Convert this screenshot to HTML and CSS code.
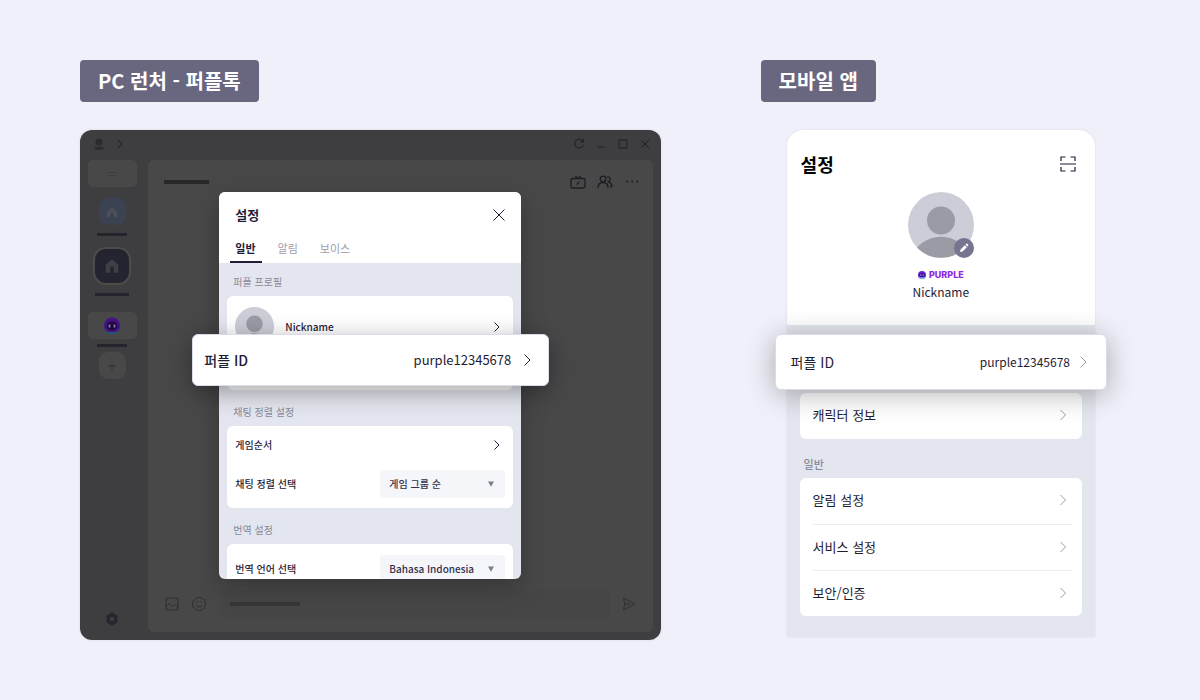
FILE: index.html
```html
<!DOCTYPE html>
<html lang="ko">
<head>
  <meta charset="utf-8">
  <title>퍼플 ID</title>
  <link rel="stylesheet" href="styles.css">
</head>
<body>
<div class="container">

  <!-- PC launcher -->
  <section class="pc">
    <h2 class="badge">PC 런처 - 퍼플톡</h2>
    <div class="window">
      <div class="titlebar">
        <svg width="12" height="14" viewBox="0 0 12 14"><circle cx="6" cy="5" r="3.6" fill="#2c2c2e"/><path d="M1 11.500c1-2.600 9-2.600 10 0-1.500 2-8.500 2-10 0z" fill="#2c2c2e"/></svg>
        <svg width="8" height="10" viewBox="0 0 8 10"><path d="M2 1l4 4-4 4" class="line"/></svg>
        <div class="window-controls">
          <svg width="12" height="12" viewBox="0 0 12 12"><path d="M10 3.500A4.400 4.400 0 1 0 10.300 7M10.300 1v3H7.300" class="line"/></svg>
          <svg width="12" height="12" viewBox="0 0 12 12"><path d="M2.500 9h7" class="line"/></svg>
          <svg width="12" height="12" viewBox="0 0 12 12"><path d="M2 2h8v8H2z" class="line"/></svg>
          <svg width="12" height="12" viewBox="0 0 12 12"><path d="M2 2l8 8M10 2l-8 8" class="line"/></svg>
        </div>
      </div>

      <div class="window-body">
        <div class="sidebar">
          <div class="side-box">
            <svg width="12" height="6" viewBox="0 0 12 6"><path d="M1 1.500h10M1 4.500h10" stroke="#3f3f40" fill="none"/></svg>
          </div>
          <div class="side-group">
            <div class="side-icon blue">
              <svg width="14" height="14" viewBox="0 0 14 14"><path d="M7 2L2 6.500v5.500h3.500V9a1.500 1.500 0 0 1 3 0v3H12V6.500z" fill="#4a4f58"/></svg>
            </div>
            <div class="bar"></div>
          </div>
          <div class="side-group">
            <div class="side-icon active">
              <svg width="16" height="16" viewBox="0 0 14 14"><path d="M7 1L1.500 6v7H5.500V9a1.500 1.500 0 0 1 3 0v4h4V6z" fill="#3e3e44"/></svg>
            </div>
            <div class="bar wide"></div>
          </div>
          <div class="side-group talk">
            <div class="side-box">
              <svg width="20" height="20" viewBox="0 0 20 20"><circle cx="10" cy="10" r="8.500" fill="#2d4a68"/><circle cx="10" cy="9.500" r="8" fill="#451482"/><ellipse cx="10" cy="10" rx="5.500" ry="4.500" fill="#210843"/><path d="M4 15c2 4 10 4 12 0-3 1.800-9 1.800-12 0z" fill="#246272"/><path d="M7.500 8.500v3M12.500 8.500v3" stroke="#8c77a4" stroke-width="1.800"/></svg>
            </div>
            <div class="bar"></div>
          </div>
          <div class="side-icon plus">
            <svg width="10" height="10" viewBox="0 0 10 10"><path d="M5 1v8M1 5h8" stroke="#2c2c2e" stroke-width=".8" fill="none"/></svg>
          </div>
          <svg class="gear" width="14" height="14" viewBox="0 0 14 14"><path d="M5.300.8h3.400l.5 1.800 1.800-.4 1.900 3L11.700 7l1.200 1.800-1.900 3-1.800-.4-.5 1.800H5.300l-.5-1.800-1.800.4-1.900-3L2.300 7 1.100 5.200l1.900-3 1.800.4z" fill="#27262e"/><circle cx="7" cy="7" r="2.100" fill="#434345"/></svg>
        </div>

        <div class="chat">
          <div class="chat-header">
            <div class="bar"></div>
            <svg width="16" height="16" viewBox="0 0 16 16"><path d="M2.500 4.500h11q1.500 0 1.500 1.500v6.500q0 1.500-1.500 1.500h-11Q1 14 1 12.500V6q0-1.500 1.500-1.500zM5.500 2l2 2.500M10.500 2l-2 2.500M6.700 10.500l2.600-2.500" class="line bold"/></svg>
            <svg width="16" height="16" viewBox="0 0 16 16"><circle cx="6" cy="5" r="2.800" class="line bold"/><path d="M1 14c0-3.500 2-5.500 5-5.500s5 2 5 5.500M10 3.200a2.300 2.300 0 1 1 .5 4.300C13 8 14.800 10 14.800 12.500h-2" class="line bold"/></svg>
            <svg width="16" height="16" viewBox="0 0 16 16"><path d="M3.200 7.500h.010M8.200 7.500h.010M13.200 7.500h.010" stroke="#1d1c24" stroke-width="2" stroke-linecap="round"/></svg>
          </div>
          <div class="chat-footer">
            <svg width="14" height="14" viewBox="0 0 14 14"><path d="M1 1h12v12H1zM1 9.500l3.500-3.500 3 4 2.500-2.500 3 3M9.500 3.800h1" class="line dim"/></svg>
            <svg width="16" height="16" viewBox="0 0 16 16"><circle cx="8" cy="8" r="6.500" class="line dim"/><path d="M5 9c1 2.500 5 2.500 6 0M6 5.500v1.300M10 5.500v1.300" class="line dim"/></svg>
            <div class="chat-input"><div class="bar"></div></div>
            <svg width="14" height="14" viewBox="0 0 14 14"><path d="M1.500 1l11.500 6-11.500 6 1.200-6zM2.700 7H8" class="line dim"/></svg>
          </div>
        </div>
      </div>

      <div class="modal-wrap">
        <div class="modal">
          <div class="modal-header">
            <div class="modal-title">
              <h3>설정</h3>
              <button class="icon-button" aria-label="닫기">
                <svg width="14" height="14" viewBox="0 0 14 14"><path d="M1.500 1.500l11 11M12.500 1.500l-11 11" class="arrow"/></svg>
              </button>
            </div>
            <div class="tabs">
              <button class="tab selected">일반</button>
              <button class="tab">알림</button>
              <button class="tab">보이스</button>
            </div>
          </div>
          <div class="modal-body">
            <h4>퍼플 프로필</h4>
            <div class="card profile-card">
              <a class="profile-row" href="#">
                <svg width="39" height="39" viewBox="0 0 66 66"><circle cx="33" cy="33" r="33" fill="#cdcdd8"/><circle cx="33" cy="28.500" r="14" fill="#9b9ba5"/><path d="M9 55.500C22 41 44 41 57 55.500A33 33 0 0 1 9 55.500z" fill="#9b9ba5"/></svg>
                <span>Nickname</span>
                <svg width="8" height="12" viewBox="0 0 8 12"><path d="M1.500 1.500L6 6l-4.500 4.500" class="arrow"/></svg>
              </a>
            </div>
            <h4>채팅 정렬 설정</h4>
            <div class="card">
              <a class="row" href="#">
                <span>게임순서</span>
                <svg width="8" height="12" viewBox="0 0 8 12"><path d="M1.500 1.500L6 6l-4.500 4.500" class="arrow"/></svg>
              </a>
              <div class="row">
                <label for="chatSort">채팅 정렬 선택</label>
                <div class="select-box">
                  <select id="chatSort"><option>게임 그룹 순</option></select>
                  <svg width="6" height="6" viewBox="0 0 6 6"><path d="M0 .5h6L3 5.800z" fill="#7d7c8e"/></svg>
                </div>
              </div>
            </div>
            <h4>번역 설정</h4>
            <div class="card">
              <div class="row language">
                <label for="language">번역 언어 선택</label>
                <div class="select-box">
                  <select id="language"><option>Bahasa Indonesia</option></select>
                  <svg width="6" height="6" viewBox="0 0 6 6"><path d="M0 .5h6L3 5.800z" fill="#7d7c8e"/></svg>
                </div>
              </div>
            </div>
          </div>
        </div>

        <a class="id-card" href="#">
          <strong>퍼플 ID</strong>
          <span>purple12345678</span>
          <svg width="9" height="14" viewBox="0 0 9 14"><path d="M1.500 1.500L7 7l-5.500 5.500" class="arrow"/></svg>
        </a>
      </div>
    </div>
  </section>

  <!-- Mobile app -->
  <section class="mobile">
    <h2 class="badge">모바일 앱</h2>
    <div class="phone">
      <div class="phone-header">
        <div class="phone-title">
          <h3>설정</h3>
          <button class="icon-button" aria-label="스캔">
            <svg width="16" height="16" viewBox="0 0 16 16"><path d="M1 5V1h4.500M10.500 1H15v4M1 11v4h4.500M10.500 15H15v-4M0 8h16" stroke="#1f1c35" stroke-width="1.200" fill="none"/></svg>
          </button>
        </div>
        <div class="avatar">
          <svg width="66" height="66" viewBox="0 0 66 66"><circle cx="33" cy="33" r="33" fill="#cdcdd8"/><circle cx="33" cy="28.500" r="14" fill="#9b9ba5"/><path d="M9 55.500C22 41 44 41 57 55.500A33 33 0 0 1 9 55.500z" fill="#9b9ba5"/></svg>
          <button class="edit" aria-label="편집">
            <svg width="10" height="10" viewBox="0 0 10 10"><path d="M1 9l.6-2.600L5.800 2.200l2 2L3.600 8.400zM6.400 1.600L7.300.8q.5-.4 1 0l.9.9q.4.500 0 1l-.8.900z" fill="#fff"/></svg>
          </button>
        </div>
        <div class="brand">
          <svg width="8" height="8" viewBox="0 0 8 8"><circle cx="4" cy="4" r="4" fill="#6b24d6"/><path d="M.3 5.400a4 4 0 0 0 7.400 0C5.500 7 2.500 7 .3 5.400z" fill="#7be0ff"/><ellipse cx="4" cy="4" rx="2.900" ry="2" fill="#32108a"/><path d="M2.800 3.300v1.500M5.200 3.300v1.500" stroke="#e4c8ff" stroke-width=".9"/></svg>
          <span>PURPLE</span>
        </div>
        <p class="nickname">Nickname</p>
      </div>
      <div class="phone-body">
        <div class="card">
          <a class="row" href="#"><span>캐릭터 정보</span><svg width="8" height="12" viewBox="0 0 8 12"><path d="M1.500 1L6.500 6l-5 5" class="arrow light"/></svg></a>
        </div>
        <h4>일반</h4>
        <div class="card">
          <a class="row" href="#"><span>알림 설정</span><svg width="8" height="12" viewBox="0 0 8 12"><path d="M1.500 1L6.500 6l-5 5" class="arrow light"/></svg></a>
          <a class="row" href="#"><span>서비스 설정</span><svg width="8" height="12" viewBox="0 0 8 12"><path d="M1.500 1L6.500 6l-5 5" class="arrow light"/></svg></a>
          <a class="row" href="#"><span>보안/인증</span><svg width="8" height="12" viewBox="0 0 8 12"><path d="M1.500 1L6.500 6l-5 5" class="arrow light"/></svg></a>
        </div>
      </div>

      <a class="id-card" href="#">
        <strong>퍼플 ID</strong>
        <span>purple12345678</span>
        <svg width="9" height="14" viewBox="0 0 9 14"><path d="M1.500 1.500L7 7l-5.500 5.500" class="arrow light"/></svg>
      </a>
    </div>
  </section>

</div>
</body>
</html>
```
FILE: styles.css
```css
* {
  margin: 0;
  padding: 0;
  box-sizing: border-box;
}

body {
  background-color: #f0f0fa;
  color: #1f1c35;
  font-family: "Noto Sans CJK KR", sans-serif;
  font-size: 11px;
  line-height: 16px;
}

a {
  color: inherit;
  text-decoration: none;
}

button {
  background: none;
  border: none;
  font: inherit;
  color: inherit;
  cursor: pointer;
}

svg {
  display: block;
  flex: none;
}

.container {
  display: flex;
  gap: 100px;
  padding: 60px 79px 60px 80px;
}

.pc {
  flex: 58;
}

.mobile {
  flex: 36;
}

/* Section badge */
.badge {
  display: inline-block;
  background-color: #69677f;
  color: #fff;
  font-size: 20px;
  font-weight: bold;
  line-height: 42px;
  padding: 0 18px;
  border-radius: 4px;
  vertical-align: top;
}

/* Icon strokes */
.line {
  fill: none;
  stroke: #1d1c24;
}

.line.bold {
  stroke-width: 1.3;
}

.line.dim {
  stroke: #2f2f31;
}

.arrow {
  fill: none;
  stroke: #1f1c35;
}

.arrow.light {
  stroke: #9d9ca9;
}

.bar {
  height: 4px;
  background-color: #28282a;
}

/* PC window */
.window {
  position: relative;
  display: flex;
  flex-direction: column;
  height: 510px;
  margin-top: 28px;
  padding-bottom: 8px;
  background-color: #3e3e40;
  border-radius: 12px;
  box-shadow: 0 0 3px rgba(0, 0, 0, 0.1);
}

.titlebar {
  display: flex;
  align-items: center;
  gap: 11px;
  height: 30px;
  padding: 0 10px 3px 13px;
}

.window-controls {
  display: flex;
  gap: 10px;
  margin-left: auto;
}

.window-body {
  flex: 1;
  display: flex;
  gap: 4px;
  padding-right: 8px;
}

.sidebar {
  width: 64px;
  display: flex;
  flex-direction: column;
  align-items: center;
}

.side-box {
  display: flex;
  align-items: center;
  justify-content: center;
  width: 49px;
  height: 27px;
  background-color: #484848;
  border-radius: 5px;
}

.side-group {
  display: flex;
  flex-direction: column;
  align-items: center;
  gap: 8px;
  margin-top: 11px;
}

.side-group .bar {
  width: 30px;
  height: 3px;
  background-color: #26252d;
}

.side-group .bar.wide {
  width: 34px;
}

.side-group.talk {
  gap: 5px;
  margin-top: 16px;
}

.side-icon {
  display: flex;
  align-items: center;
  justify-content: center;
  width: 27px;
  height: 27px;
  border-radius: 9px;
}

.side-icon.blue {
  background-color: #3b4352;
}

.side-icon.active {
  width: 38px;
  height: 38px;
  border: 2px solid #4c4c4a;
  border-radius: 13px;
  background-color: #242330;
}

.side-icon.plus {
  margin-top: 5px;
  background-color: #484848;
}

.gear {
  margin-top: auto;
  margin-bottom: 6px;
}

.chat {
  flex: 1;
  display: flex;
  flex-direction: column;
  justify-content: space-between;
  background-color: #484848;
  border-radius: 6px;
}

.chat-header {
  display: flex;
  align-items: center;
  gap: 11px;
  padding: 14px 13px 14px 16px;
}

.chat-header .bar {
  width: 45px;
  margin-right: auto;
}

.chat-footer {
  display: flex;
  align-items: center;
  gap: 12px;
  padding: 0 17px 14px;
}

.chat-input {
  flex: 1;
  display: flex;
  align-items: center;
  height: 28px;
  padding-left: 11px;
  background-color: #464646;
  border-radius: 3px;
}

.chat-input .bar {
  width: 70px;
  background-color: #363637;
}

/* Settings modal */
.modal-wrap {
  position: absolute;
  top: 62px;
  left: 24%;
  right: 24%;
}

.modal {
  height: 387px;
  overflow: hidden;
  background-color: #e3e6ee;
  border-radius: 6px;
  box-shadow: 0 8px 24px rgba(0, 0, 0, 0.25);
}

.modal-header {
  height: 71px;
  padding: 14px 15px 0 11px;
  background-color: #fff;
}

.modal-title {
  display: flex;
  align-items: center;
  justify-content: space-between;
  height: 18px;
  padding-left: 5px;
}

.modal-title h3 {
  font-size: 13px;
}

.icon-button {
  display: flex;
}

.tabs {
  display: flex;
  gap: 10px;
  margin-top: 9px;
}

.tab {
  height: 30px;
  padding: 0 6px;
  color: #9d9ca9;
}

.tab.selected {
  color: #1f1c35;
  font-weight: bold;
  border-bottom: 2px solid #1f1c35;
  padding: 2px 6px 0 5px;
}

.modal-body {
  padding: 11px 8px 0;
}

h4 {
  color: #8a899a;
  font-weight: normal;
}

.modal-body h4 {
  font-size: 10px;
  padding-left: 6px;
  margin-bottom: 6px;
}

.card {
  background-color: #fff;
  border-radius: 6px;
}

.modal-body .card {
  padding: 0 8px;
  margin-bottom: 14px;
  font-size: 10px;
  font-weight: 500;
}

.modal-body .profile-card {
  height: 94px;
}

.profile-row {
  display: flex;
  align-items: center;
  gap: 11px;
  padding: 11px 4px 0 0;
}

.profile-row span {
  flex: 1;
}

.row {
  display: flex;
  align-items: center;
  justify-content: space-between;
}

.modal-body .row {
  height: 38px;
  padding-right: 4px;
}

.modal-body div.row {
  height: 44px;
  padding: 0 0 4px;
}

.modal-body div.language {
  height: 50px;
  padding: 0;
}

.select-box {
  position: relative;
  display: flex;
  align-items: center;
  width: 125px;
}

.select-box select {
  appearance: none;
  width: 100%;
  height: 28px;
  padding: 0 9px;
  color: #33314a;
  font: inherit;
  background-color: #f5f6fa;
  border: none;
  border-radius: 3px;
}

/* The arrow sits over the select */
.select-box svg {
  position: absolute;
  right: 11px;
  pointer-events: none;
}

/* Highlighted ID row, drawn over the settings */
.id-card {
  position: absolute;
  display: flex;
  align-items: center;
  background-color: #fff;
  border: 1px solid #dcdbea;
  border-radius: 6px;
  font-size: 14px;
}

.id-card strong {
  flex: 1;
  font-weight: 500;
}

.modal-wrap .id-card {
  top: 142px;
  left: -27px;
  right: -28px;
  height: 52px;
  padding: 0 16px 0 11px;
  gap: 12px;
  box-shadow: 0 6px 24px rgba(0, 0, 0, 0.35);
}

.modal-wrap .id-card span {
  font-size: 13px;
}

/* Phone */
.phone {
  position: relative;
  height: 507px;
  margin: 28px 26px 0;
  background-color: #e3e6ee;
  border-radius: 16px 16px 0 0;
  box-shadow: 0 0 3px rgba(0, 0, 0, 0.08);
}

.phone-header {
  height: 195px;
  padding-top: 20px;
  background-color: #fff;
  border-radius: 16px 16px 0 0;
  display: flex;
  flex-direction: column;
  align-items: center;
}

.phone-title {
  align-self: stretch;
  display: flex;
  align-items: center;
  justify-content: space-between;
  height: 28px;
  padding: 0 19px 0 14px;
}

.phone-title h3 {
  color: #000;
  font-size: 18px;
}

.avatar {
  position: relative;
  margin-top: 14px;
}

.edit {
  position: absolute;
  right: 0;
  bottom: 0;
  display: flex;
  align-items: center;
  justify-content: center;
  width: 20px;
  height: 20px;
  background-color: #767590;
  border-radius: 50%;
}

.brand {
  display: flex;
  align-items: center;
  gap: 3px;
  margin-top: 9px;
  color: #8a2be2;
  font-family: Inter, sans-serif;
  font-size: 9px;
  font-weight: 800;
}

.nickname {
  font-size: 12px;
  margin-top: 1px;
}

.phone-body {
  padding: 68px 13px 0;
}

.phone-body h4 {
  padding-left: 4px;
  margin: 17px 0 6px;
  font-weight: 500;
}

.phone-body .row {
  height: 46px;
  margin: 0 10px 0 13px;
  padding-right: 5px;
  padding-bottom: 2px;
  font-size: 13px;
}

.phone-body .row + .row {
  border-top: 1px solid #ececf1;
}

.phone .id-card {
  top: 204px;
  left: -12px;
  right: -12px;
  height: 56px;
  padding: 0 18px 0 15px;
  gap: 9px;
  box-shadow: 0 4px 28px rgba(0, 0, 0, 0.3);
}

.phone .id-card strong {
  font-weight: normal;
}

.phone .id-card span {
  font-size: 12px;
}
```
